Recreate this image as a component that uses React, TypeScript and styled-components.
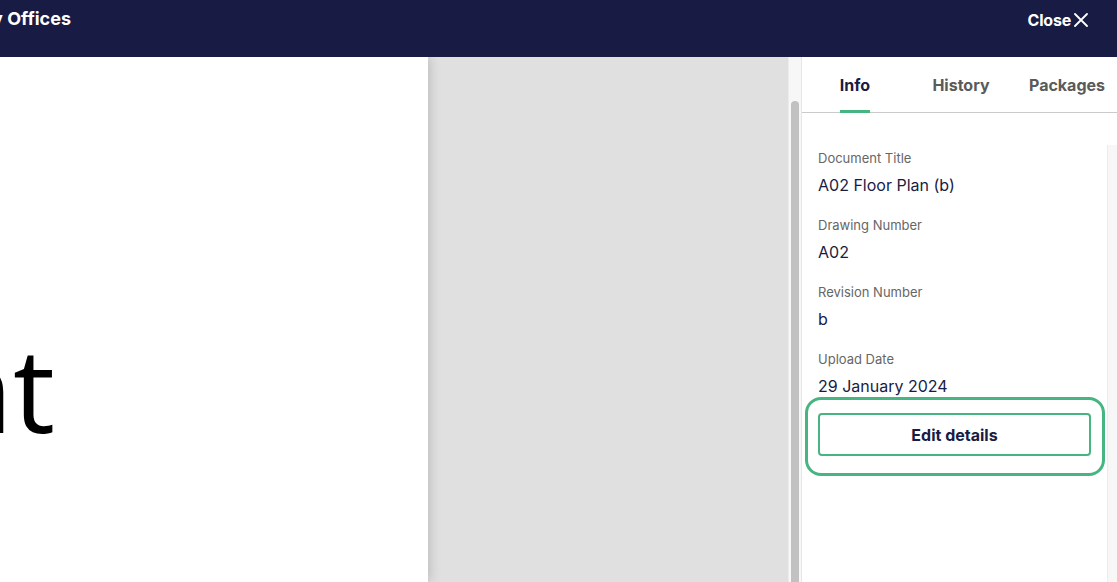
import styled, { createGlobalStyle } from "styled-components";

const navy = "#181c44";
const green = "#46b581";

const GlobalStyle = createGlobalStyle`
  html, body { margin: 0; padding: 0; }
  body {
    font-family: Inter, "Noto Sans", sans-serif;
    background: #fff;
    overflow: hidden;
  }
`;

const Shell = styled.div`
  height: 582px;
  display: flex;
  flex-direction: column;
`;

const Header = styled.header`
  height: 57px;
  flex: none;
  background: ${navy};
  color: #fff;
  display: flex;
  align-items: flex-start;
  justify-content: space-between;
  overflow: hidden;
`;

// right-aligned so the long title spills off the left edge
const TitleClip = styled.div`
  width: 71px;
  display: flex;
  justify-content: flex-end;
  white-space: nowrap;
  font-size: 18px;
  font-weight: 700;
  line-height: 24px;
  padding-top: 7px;
`;

const CloseButton = styled.button`
  all: unset;
  display: flex;
  align-items: center;
  gap: 3px;
  margin: 10px 29px 0 0;
  font-family: Inter, sans-serif;
  font-size: 16px;
  font-weight: 700;
  letter-spacing: -0.2px;
  line-height: 20px;
  color: #fff;
  cursor: pointer;
`;

const Body = styled.div`
  flex: 1;
  display: flex;
  min-height: 0;
`;

const Viewer = styled.div`
  flex: 1;
  display: flex;
  background: #e0e0e0;
  overflow: hidden;
`;

const Page = styled.div`
  width: 428px;
  background: #fff;
  box-shadow: 0 0 12px rgba(0, 0, 0, 0.22);
  overflow: hidden;
`;

const PageText = styled.div`
  width: 55px;
  margin-top: 250px;
  display: flex;
  justify-content: flex-end;
  white-space: nowrap;
  font-family: "Open Sans", "Noto Sans", sans-serif;
  font-size: 118px;
  color: #000;
`;

const Track = styled.div<{ $top: number; $width: number }>`
  width: ${(p) => p.$width}px;
  flex: none;
  background: #f7f7f7;
  border-left: 1px solid #ececec;
  box-sizing: border-box;
  display: flex;
  flex-direction: column;
  align-items: center;
  padding-top: ${(p) => p.$top}px;
`;

const Thumb = styled.div`
  width: 8px;
  flex: 1;
  border-radius: 4px 4px 0 0;
  background: #c1c1c1;
`;

const Panel = styled.aside`
  width: 316px;
  flex: none;
  box-sizing: border-box;
  border-left: 1px solid #e6e6e6;
  display: flex;
  flex-direction: column;
  background: #fff;
`;

const TabBar = styled.nav`
  height: 55px;
  flex: none;
  display: grid;
  grid-template-columns: repeat(3, 106px);
  align-items: end;
  border-bottom: 1px solid #cacaca;
  margin-right: -3px;
`;

const Tab = styled.button<{ $active?: boolean }>`
  all: unset;
  justify-self: center;
  font-family: Inter, sans-serif;
  font-size: 16px;
  font-weight: 700;
  line-height: 20px;
  padding-bottom: 15px;
  margin-bottom: -1px;
  color: ${(p) => (p.$active ? navy : "#5a5a5a")};
  border-bottom: 3px solid ${(p) => (p.$active ? green : "transparent")};
  cursor: pointer;
`;

const Content = styled.div`
  flex: 1;
  display: flex;
  margin-top: 32px;
  min-height: 0;
`;

const Fields = styled.div`
  flex: 1;
  padding: 5px 16px 0;
  display: flex;
  flex-direction: column;
`;

const Field = styled.div<{ $last?: boolean }>`
  display: flex;
  flex-direction: column;
  gap: 9px;
  margin-bottom: ${(p) => (p.$last ? 1 : 22)}px;
`;

const Label = styled.span`
  font-size: 13px;
  line-height: 16px;
  color: #666;
`;

const Value = styled.span`
  font-size: 16px;
  line-height: 20px;
  color: ${navy};
`;

const FocusRing = styled.div`
  border: 3px solid ${green};
  border-radius: 16px;
  padding: 13px 11px 17px 10px;
  margin: 0 -14px 0 -13px;
`;

const EditButton = styled.button`
  all: unset;
  box-sizing: border-box;
  width: 100%;
  height: 43px;
  display: flex;
  align-items: center;
  justify-content: center;
  border: 2px solid ${green};
  border-radius: 4px;
  font-family: Inter, sans-serif;
  font-size: 16px;
  font-weight: 700;
  color: ${navy};
  cursor: pointer;
`;

const CloseIcon = () => (
  <svg width="14" height="14" viewBox="0 0 14 14" fill="none">
    <path d="M1 1L13 13M13 1L1 13" stroke="#fff" strokeWidth="1.8" strokeLinecap="round" />
  </svg>
);

const fields = [
  { label: "Document Title", value: "A02 Floor Plan (b)" },
  { label: "Drawing Number", value: "A02" },
  { label: "Revision Number", value: "b" },
  { label: "Upload Date", value: "29 January 2024" },
];

export default function App() {
  return (
    <Shell>
      <GlobalStyle />
      <Header>
        <TitleClip>
          <span>Factory Offices</span>
        </TitleClip>
        <CloseButton>
          Close <CloseIcon />
        </CloseButton>
      </Header>
      <Body>
        <Viewer>
          <Page>
            <PageText>
              <span>Document</span>
            </PageText>
          </Page>
        </Viewer>
        <Track $top={44} $width={13}>
          <Thumb />
        </Track>
        <Panel>
          <TabBar>
            <Tab $active>Info</Tab>
            <Tab>History</Tab>
            <Tab>Packages</Tab>
          </TabBar>
          <Content>
            <Fields>
              {fields.map((f, i) => (
                <Field key={f.label} $last={i === fields.length - 1}>
                  <Label>{f.label}</Label>
                  <Value>{f.value}</Value>
                </Field>
              ))}
              <FocusRing>
                <EditButton>Edit details</EditButton>
              </FocusRing>
            </Fields>
            <Track $top={0} $width={10} />
          </Content>
        </Panel>
      </Body>
    </Shell>
  );
}
